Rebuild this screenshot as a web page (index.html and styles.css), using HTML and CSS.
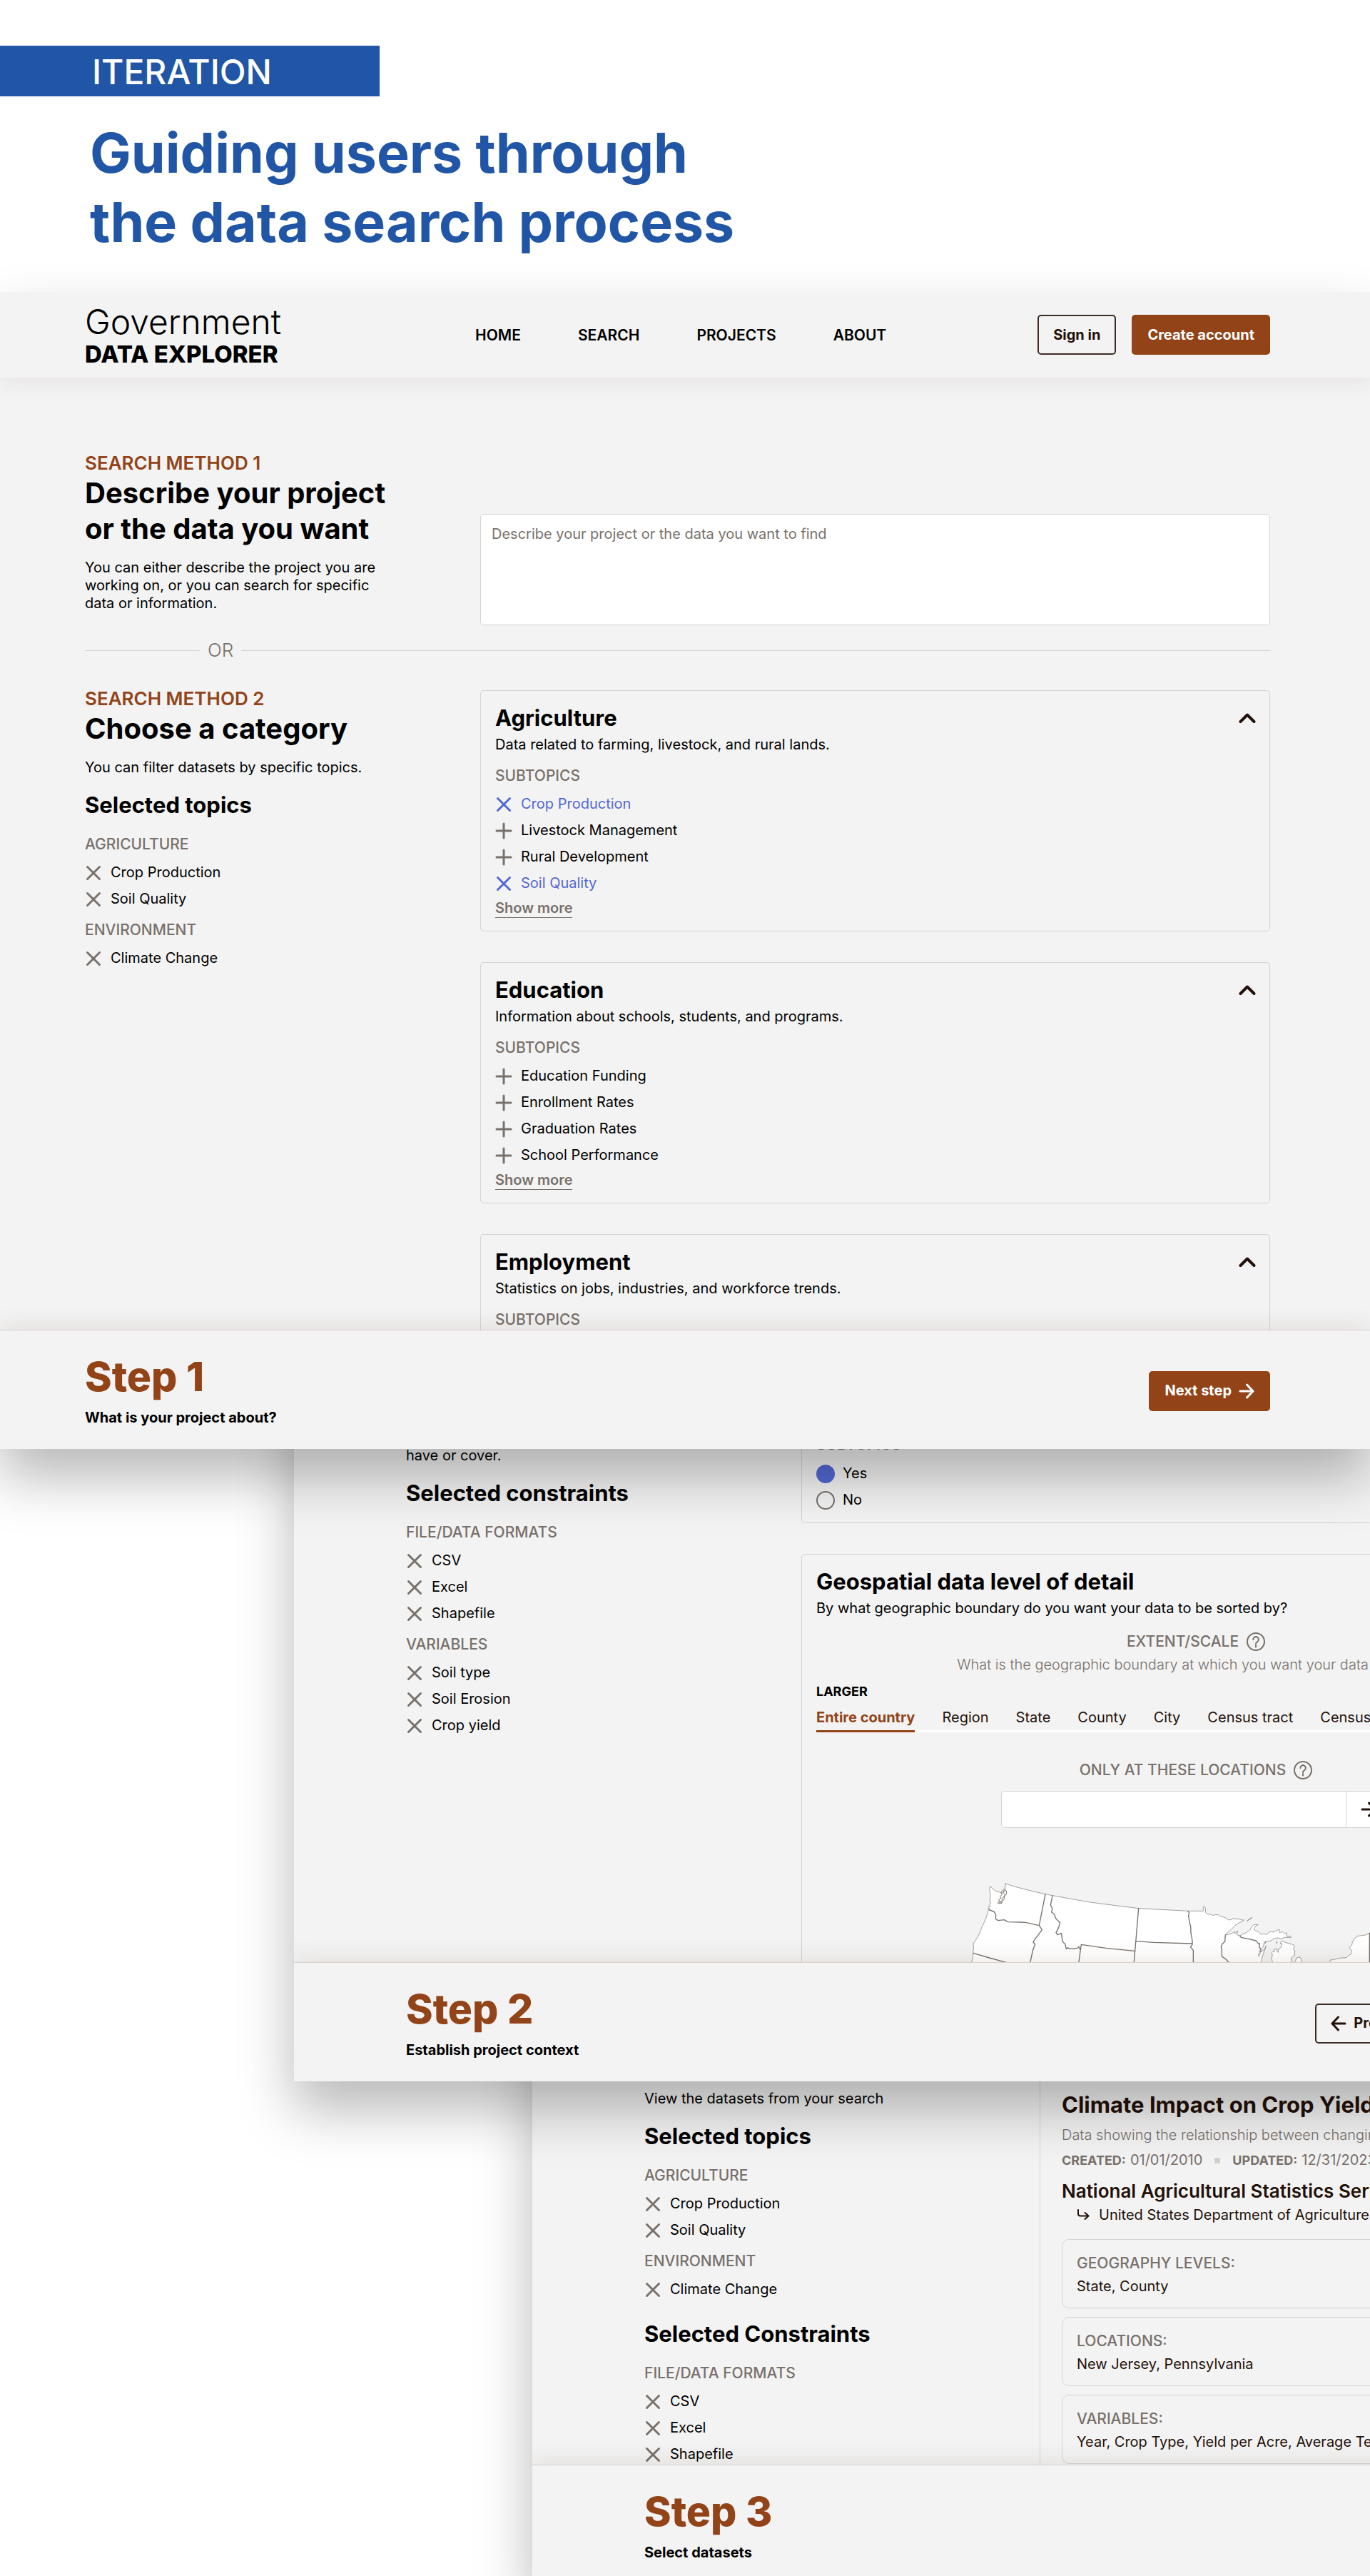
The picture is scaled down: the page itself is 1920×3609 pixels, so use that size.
FILE: index.html
```
<!DOCTYPE html>
<html lang="en">
<head>
  <meta charset="utf-8">
  <meta name="viewport" content="width=device-width, initial-scale=1">
  <title>Guiding users through the data search process</title>
  <link rel="stylesheet" href="styles.css">
</head>
<body>
  <svg class="sprite" aria-hidden="true">
    <symbol id="x" viewBox="0 0 24 24"><path d="M3.5 3.5l17 17M20.5 3.5l-17 17"/></symbol>
    <symbol id="plus" viewBox="0 0 24 24"><path d="M12 2v20M2 12h20"/></symbol>
    <symbol id="chevron" viewBox="0 0 24 24"><path d="M2.500 17L12 7.500l9.500 9.500"/></symbol>
    <symbol id="arrow-right" viewBox="0 0 22 22"><path d="M2 11h18M11.500 2l8.500 9-8.500 9"/></symbol>
    <symbol id="arrow-left" viewBox="0 0 22 22"><path d="M20 11H2M10.500 2L2 11l8.500 9"/></symbol>
    <symbol id="help" viewBox="0 0 28 28"><circle cx="14" cy="14" r="12"/><path d="M10.300 11a3.800 3.800 0 1 1 5.800 3.200c-1.400.9-2.100 1.500-2.100 3.100M14 19.300v2.200"/></symbol>
    <symbol id="turn" viewBox="0 0 20 20"><path d="M3 2v5.500a3 3 0 0 0 3 3h11M12.500 6l5 4.500-5 4.500"/></symbol>
  </svg>

  <main class="page">
    <header class="intro">
      <p class="intro__tag">ITERATION</p>
      <h1 class="intro__title">Guiding users through<br>the data search process</h1>
    </header>

    <section class="screen screen--one">
      <header class="topbar">
        <a class="logo" href="#"><span class="logo__light">Government</span><span class="logo__bold">DATA EXPLORER</span></a>
        <nav class="nav">
          <a href="#">HOME</a>
          <a href="#">SEARCH</a>
          <a href="#">PROJECTS</a>
          <a href="#">ABOUT</a>
        </nav>
        <div class="actions">
          <button class="btn btn--outline" type="button">Sign in</button>
          <button class="btn btn--solid" type="button">Create account</button>
        </div>
      </header>

      <div class="screen__body">
        <div class="split">
          <div>
            <p class="eyebrow">SEARCH METHOD 1</p>
            <h2 class="heading"><label for="describe">Describe your project<br>or the data you want</label></h2>
            <p class="text">You can either describe the project you are<br>working on, or you can search for specific<br>data or information.</p>
          </div>
          <textarea class="describe" id="describe" placeholder="Describe your project or the data you want to find"></textarea>
        </div>

        <div class="divider"><span>OR</span></div>

        <div class="split">
          <aside>
            <p class="eyebrow">SEARCH METHOD 2</p>
            <h2 class="heading">Choose a category</h2>
            <p class="text">You can filter datasets by specific topics.</p>
            <h3 class="title title--spaced">Selected topics</h3>
            <h4 class="label">AGRICULTURE</h4>
            <ul class="items">
              <li><button class="item" type="button"><svg class="icon"><use href="#x"/></svg>Crop Production</button></li>
              <li><button class="item" type="button"><svg class="icon"><use href="#x"/></svg>Soil Quality</button></li>
            </ul>
            <h4 class="label">ENVIRONMENT</h4>
            <ul class="items">
              <li><button class="item" type="button"><svg class="icon"><use href="#x"/></svg>Climate Change</button></li>
            </ul>
          </aside>

          <div class="cards cards--topics">
            <article class="card">
              <div class="card__head"><h3 class="title">Agriculture</h3><button class="toggle" type="button" aria-label="Collapse Agriculture"><svg class="icon"><use href="#chevron"/></svg></button></div>
              <p class="card__text">Data related to farming, livestock, and rural lands.</p>
              <h4 class="label">SUBTOPICS</h4>
              <ul class="items">
                <li><button class="item item--on" type="button"><svg class="icon"><use href="#x"/></svg>Crop Production</button></li>
                <li><button class="item" type="button"><svg class="icon"><use href="#plus"/></svg>Livestock Management</button></li>
                <li><button class="item" type="button"><svg class="icon"><use href="#plus"/></svg>Rural Development</button></li>
                <li><button class="item item--on" type="button"><svg class="icon"><use href="#x"/></svg>Soil Quality</button></li>
              </ul>
              <button class="more" type="button">Show more</button>
            </article>
            <article class="card">
              <div class="card__head"><h3 class="title">Education</h3><button class="toggle" type="button" aria-label="Collapse Education"><svg class="icon"><use href="#chevron"/></svg></button></div>
              <p class="card__text">Information about schools, students, and programs.</p>
              <h4 class="label">SUBTOPICS</h4>
              <ul class="items">
                <li><button class="item" type="button"><svg class="icon"><use href="#plus"/></svg>Education Funding</button></li>
                <li><button class="item" type="button"><svg class="icon"><use href="#plus"/></svg>Enrollment Rates</button></li>
                <li><button class="item" type="button"><svg class="icon"><use href="#plus"/></svg>Graduation Rates</button></li>
                <li><button class="item" type="button"><svg class="icon"><use href="#plus"/></svg>School Performance</button></li>
              </ul>
              <button class="more" type="button">Show more</button>
            </article>
            <article class="card card--tall">
              <div class="card__head"><h3 class="title">Employment</h3><button class="toggle" type="button" aria-label="Collapse Employment"><svg class="icon"><use href="#chevron"/></svg></button></div>
              <p class="card__text">Statistics on jobs, industries, and workforce trends.</p>
              <h4 class="label">SUBTOPICS</h4>
            </article>
          </div>
        </div>
      </div>

      <footer class="stepbar">
        <div>
          <h2 class="stepbar__title">Step 1</h2>
          <p class="stepbar__text">What is your project about?</p>
        </div>
        <div class="actions">
          <button class="btn btn--solid" type="button">Next step<svg class="arrow"><use href="#arrow-right"/></svg></button>
        </div>
      </footer>
    </section>

    <section class="screen screen--two">
      <div class="screen__body">
        <div class="split">
          <aside>
            <p class="text">have or cover.</p>
            <h3 class="title title--spaced">Selected constraints</h3>
            <h4 class="label">FILE/DATA FORMATS</h4>
            <ul class="items">
              <li><button class="item" type="button"><svg class="icon"><use href="#x"/></svg>CSV</button></li>
              <li><button class="item" type="button"><svg class="icon"><use href="#x"/></svg>Excel</button></li>
              <li><button class="item" type="button"><svg class="icon"><use href="#x"/></svg>Shapefile</button></li>
            </ul>
            <h4 class="label">VARIABLES</h4>
            <ul class="items">
              <li><button class="item" type="button"><svg class="icon"><use href="#x"/></svg>Soil type</button></li>
              <li><button class="item" type="button"><svg class="icon"><use href="#x"/></svg>Soil Erosion</button></li>
              <li><button class="item" type="button"><svg class="icon"><use href="#x"/></svg>Crop yield</button></li>
            </ul>
          </aside>

          <div class="cards">
            <fieldset class="card card--choices">
              <legend class="label">SUBTOPICS</legend>
              <label class="choice"><input type="radio" name="geo" checked>Yes</label>
              <label class="choice"><input type="radio" name="geo">No</label>
            </fieldset>
            <article class="card">
              <h3 class="title">Geospatial data level of detail</h3>
              <p class="card__text">By what geographic boundary do you want your data to be sorted by?</p>
              <h4 class="label label--center">EXTENT/SCALE<svg class="help"><use href="#help"/></svg></h4>
              <p class="hint">What is the geographic boundary at which you want your data grouped?</p>
              <p class="range">LARGER</p>
              <div class="tabs">
                <button class="tab tab--on" type="button">Entire country</button>
                <button class="tab" type="button">Region</button>
                <button class="tab" type="button">State</button>
                <button class="tab" type="button">County</button>
                <button class="tab" type="button">City</button>
                <button class="tab" type="button">Census tract</button>
                <button class="tab" type="button">Census block</button>
              </div>
              <label class="label label--center label--locations" for="place">ONLY AT THESE LOCATIONS<svg class="help"><use href="#help"/></svg></label>
              <div class="search">
                <input id="place" type="text">
                <button type="button" aria-label="Add location"><svg class="arrow"><use href="#arrow-right"/></svg></button>
              </div>
              <svg class="map" viewBox="15 -30 1932 360" role="img" aria-label="Map of the United States">
                <g class="map__land">
                  <path d="M30 335L34 318L39 306L40 292L42 280L41 270L44 262L42 240L50 228L62 211L70 192L76 176L86 155L92 140L98 126L104 103L108 98L104 92L110 94L107 85L115 82L109 76L117 68L111 64L113 50L114 38L112 20L110 6L113-2L120 6L128 13L138 20L150 23L163 28L172 22L169 10L178 14L174 2L180-2L176-13L215 0L280 17L345 32L375 38L420 46L480 57L540 67L640 80L737 92L870 99L945 103L1009 103L1009 86L1015 85L1018 92L1019 110L1024 115L1045 118L1050 123L1060 118L1073 119L1084 126L1100 130L1114 140L1125 140L1135 134L1148 137L1160 137L1172 141L1181 141L1172 148L1160 152L1142 164L1132 176L1118 188L1102 203L1116 202L1132 195L1142 190L1143 198L1154 186L1150 202L1162 208L1172 201L1190 194L1205 183L1212 170L1222 160L1240 160L1228 168L1222 180L1228 186L1240 188L1252 202L1264 198L1276 202L1284 192L1296 190L1304 192L1318 184L1328 181L1330 194L1342 190L1352 198L1358 194L1362 210L1370 210L1376 208L1378 214L1350 214L1338 220L1322 216L1304 220L1294 228L1286 230L1276 232L1268 240L1272 228L1264 238L1262 252L1254 260L1250 278L1242 294L1241 286L1250 262L1250 276L1268 264L1273 250L1262 282L1256 300L1252 335Z"/>
                  <path d="M1296 335L1300 318L1296 302L1300 288L1296 280L1302 272L1308 274L1306 264L1320 262L1318 272L1324 277L1326 262L1336 256L1340 240L1332 238L1340 228L1356 236L1374 240L1390 246L1392 256L1387 260L1394 270L1393 290L1382 298L1378 306L1380 316L1388 320L1396 314L1400 302L1408 297L1416 298L1422 308L1428 335Z"/>
                  <path d="M1548 335L1541 318L1543 309L1556 308L1580 301L1612 299L1618 292L1630 284L1633 272L1628 262L1622 256L1634 246L1636 232L1648 215L1660 208L1690 204L1708 196L1740 190L1800 200L1947 335Z"/>
                  <path d="M1317 232l3 3-3 4-2-4zM1192 146L1202 136L1214 130L1208 137L1198 142Z"/>
                </g>
                <path class="map__coast" d="M165 16l-6 10 4 8-9 8 6 6-12 8 6 6-10 6 8 4 2-10 8 2-6 6 4 2 6-12 8-10-2-8 8-8 2-14-8-4-6 10 8 8-8 12-6 12"/>
                <g class="map__border">
                  <path d="M345 32L319 164M108 98L128 105L137 118L136 136L146 143L172 140L188 149L240 150L262 151L319 164L331 182L312 208L299 224L294 235L302 242L292 270L279 330"/>
                  <path d="M375 38L367 78L374 92L371 108L382 116L390 136L407 152L401 172L390 194L396 203L412 197L418 232L428 242L433 262L440 257L446 262L480 259L486 253L492 266M484 330L496 244L600 259L721 271M737 92L717 330M726 230L800 235L962 240M42 280L110 300L220 330M178 320V330"/>
                  <path d="M945 103L950 112L947 122L951 150L956 168L957 196L963 228L963 244L955 254L967 268L967 330M1102 203L1100 232L1090 240L1084 252L1087 266L1087 294L1102 304L1116 318L1138 330M1163 207L1168 214L1198 220L1232 228L1240 240L1246 240L1244 256L1250 262"/>
                  <path d="M1708 196V330"/>
                </g>
              </svg>
            </article>
          </div>
        </div>
      </div>

      <footer class="stepbar">
        <div>
          <h2 class="stepbar__title">Step 2</h2>
          <p class="stepbar__text">Establish project context</p>
        </div>
        <div class="actions">
          <button class="btn btn--outline" type="button"><svg class="arrow"><use href="#arrow-left"/></svg>Previous step</button>
          <button class="btn btn--solid" type="button">Next step<svg class="arrow"><use href="#arrow-right"/></svg></button>
        </div>
      </footer>
    </section>

    <section class="screen screen--three">
      <div class="screen__body">
        <div class="split">
          <aside>
            <p class="text">View the datasets from your search</p>
            <h3 class="title title--spaced">Selected topics</h3>
            <h4 class="label">AGRICULTURE</h4>
            <ul class="items">
              <li><button class="item" type="button"><svg class="icon"><use href="#x"/></svg>Crop Production</button></li>
              <li><button class="item" type="button"><svg class="icon"><use href="#x"/></svg>Soil Quality</button></li>
            </ul>
            <h4 class="label">ENVIRONMENT</h4>
            <ul class="items">
              <li><button class="item" type="button"><svg class="icon"><use href="#x"/></svg>Climate Change</button></li>
            </ul>
            <h3 class="title title--spaced">Selected Constraints</h3>
            <h4 class="label">FILE/DATA FORMATS</h4>
            <ul class="items">
              <li><button class="item" type="button"><svg class="icon"><use href="#x"/></svg>CSV</button></li>
              <li><button class="item" type="button"><svg class="icon"><use href="#x"/></svg>Excel</button></li>
              <li><button class="item" type="button"><svg class="icon"><use href="#x"/></svg>Shapefile</button></li>
            </ul>
          </aside>

          <article class="dataset">
            <h3 class="title">Climate Impact on Crop Yields</h3>
            <p class="dataset__text">Data showing the relationship between changing climate and crop yields.</p>
            <p class="dataset__dates"><b>CREATED:</b> 01/01/2010<span class="dot"></span><b>UPDATED:</b> 12/31/2023</p>
            <h4 class="dataset__org">National Agricultural Statistics Service</h4>
            <p class="dataset__parent"><svg class="turn"><use href="#turn"/></svg>United States Department of Agriculture</p>
            <dl class="facts">
              <div><dt>GEOGRAPHY LEVELS:</dt><dd>State, County</dd></div>
              <div><dt>LOCATIONS:</dt><dd>New Jersey, Pennsylvania</dd></div>
              <div><dt>VARIABLES:</dt><dd>Year, Crop Type, Yield per Acre, Average Temperature</dd></div>
            </dl>
          </article>
        </div>
      </div>

      <footer class="stepbar">
        <div>
          <h2 class="stepbar__title">Step 3</h2>
          <p class="stepbar__text">Select datasets</p>
        </div>
      </footer>
    </section>
  </main>
</body>
</html>
```
FILE: styles.css
```
:root {
  --surface: #f3f3f3;
  --rust: #924318;
  --blue: #5468d4;
  --gray: #78716c;
  --ink: #231109;
  --line: #d8d2cf;
}

* { box-sizing: border-box; }

body {
  margin: 0;
  background: #fff;
  color: #000;
  font: 400 20px/25px Inter, "Liberation Sans", sans-serif;
}

h1, h2, h3, h4, p, ul, dl, dd, fieldset { margin: 0; padding: 0; }
ul { list-style: none; }
a { color: inherit; text-decoration: none; }
button, input, textarea { font: inherit; color: inherit; margin: 0; }
button { padding: 0; border: 0; background: none; cursor: pointer; }
svg { fill: none; stroke: currentColor; stroke-width: 2; stroke-linecap: round; stroke-linejoin: round; flex: none; }
.sprite { display: none; }

.page { overflow: hidden; }

/* Intro */
.intro { padding: 64px 0 49px; }
.intro__tag {
  width: 532px;
  padding: 2px 0 0 129px;
  background: #2155a6;
  color: #fff;
  font-size: 48px;
  font-weight: 500;
  line-height: 69px;
}
.intro__title {
  margin-top: 31px;
  padding-left: 126px;
  color: #2155a6;
  font-size: 77px;
  line-height: 97px;
}

/* Stacked screens */
.screen {
  position: relative;
  width: 100%;
  background: var(--surface);
  box-shadow: 0 40px 72px rgba(0, 0, 0, .28);
}
.screen__body { overflow: hidden; }
.screen--one { z-index: 3; }
.screen--two { z-index: 2; margin: -200px 0 0 412px; }
.screen--three { z-index: 1; margin: -200px 0 0 746px; }
.screen--one .screen__body { max-height: 1334px; padding: 103px 140px 0 119px; }
.screen--two .screen__body { max-height: 919px; padding: 0 102px 0 157px; }
.screen--three .screen__body { max-height: 737px; padding: 0 102px 0 157px; }
.screen--two aside { padding-top: 197px; }
.screen--three aside { padding-top: 212px; }

.split { display: grid; grid-template-columns: 554px minmax(0, 1fr); }

/* Top bar */
.topbar {
  position: relative;
  z-index: 1;
  display: grid;
  grid-template-columns: 547px 1fr auto;
  align-items: center;
  min-height: 120px;
  padding: 0 140px 0 119px;
  box-shadow: 0 4px 30px rgba(80, 40, 20, .08);
  clip-path: inset(0 0 -50px 0);
}
.logo { display: flex; flex-direction: column; }
.logo__light { font-size: 48px; font-weight: 300; line-height: 54px; }
.logo__bold { font-size: 33px; font-weight: 800; line-height: 36px; }
.nav { display: flex; gap: 80px; font-size: 21px; font-weight: 600; }
.actions { display: flex; gap: 22px; }

.btn {
  display: flex;
  align-items: center;
  gap: 10px;
  height: 56px;
  padding: 0 20px;
  border: 2px solid var(--rust);
  border-radius: 5px;
  font-weight: 700;
}
.btn--solid { background: var(--rust); color: #fff; }
.btn--outline { border-color: #3d2c25; color: var(--ink); }
.arrow { width: 22px; height: 22px; stroke-width: 3; }

/* Type */
.eyebrow { color: var(--rust); font-size: 26px; font-weight: 600; line-height: 34px; }
.heading { font-size: 40px; line-height: 50px; }
.heading + .text { margin-top: 17px; }
.title { font-size: 31px; line-height: 40px; }
.text + .title--spaced { margin-top: 20px; }
.items + .title--spaced { margin-top: 24px; }
.label { color: var(--gray); font-size: 21px; font-weight: 500; line-height: 30px; }
.title + .label { margin-top: 20px; }
.items + .label { margin-top: 10px; }

.items { margin-top: 6px; }
.item { display: flex; align-items: center; gap: 12px; line-height: 37px; }
.icon { width: 24px; height: 24px; }
.item .icon { color: var(--gray); stroke-width: 3; }
.item--on, .item--on .icon { color: var(--blue); }

/* Describe box */
.describe {
  display: block;
  width: 100%;
  height: 156px;
  margin-top: 88px;
  padding: 15px;
  border: 1px solid var(--line);
  border-radius: 5px;
  background: #fff;
  resize: none;
}
.describe::placeholder { color: var(--gray); opacity: 1; }

.divider {
  display: flex;
  align-items: center;
  gap: 11px;
  margin: 19px 0 35px;
  color: var(--gray);
  font-size: 26px;
  font-weight: 300;
  line-height: 32px;
}
.divider::before, .divider::after { content: ""; height: 1px; background: var(--line); }
.divider::before { width: 161px; }
.divider::after { flex: 1; }

/* Cards */
.cards { display: flex; flex-direction: column; gap: 43px; }
.cards--topics { margin-top: 5px; }
.card { padding: 18px 20px; border: 1px solid var(--line); border-radius: 5px; }
.card--tall { min-height: 338px; }
.card__head { display: flex; align-items: center; justify-content: space-between; }
.card__text { margin: 5px 0 16px; }
.toggle { display: flex; margin-right: -1px; color: var(--ink); }
.toggle .icon { stroke-width: 4; }
.more {
  display: block;
  margin-top: 4px;
  border-bottom: 1px solid var(--gray);
  color: var(--gray);
  font-weight: 600;
}

.card--choices { min-width: 0; margin-top: 160px; padding-bottom: 13px; }
.card--choices legend { float: left; width: 100%; margin-bottom: 7px; padding: 0; }
.choice { display: flex; clear: both; align-items: center; gap: 11px; line-height: 37px; }
.choice input {
  appearance: none;
  width: 26px;
  height: 26px;
  border: 2px solid var(--gray);
  border-radius: 50%;
}
.choice input:checked { border-color: var(--blue); background: var(--blue); }

.label--center { display: flex; align-items: center; justify-content: center; gap: 10px; margin-top: 19px; }
.label--locations { margin: 38px 0 14px; }
.help { width: 28px; height: 28px; }
.hint { margin: 5px 0 12px; color: var(--gray); font-weight: 300; text-align: center; }
.range { font-size: 18px; font-weight: 700; }
.tabs { display: flex; gap: 38px; margin-top: 12px; box-shadow: inset 0 -3px #fff; }
.tab { padding-bottom: 5px; border-bottom: 3px solid transparent; color: var(--ink); white-space: nowrap; }
.tab--on { border-color: var(--rust); color: var(--rust); font-weight: 700; }

.search {
  display: flex;
  width: 548px;
  height: 52px;
  margin: 0 auto;
  border: 1px solid var(--line);
  border-radius: 5px;
  background: #fff;
}
.search input { flex: 1; min-width: 0; padding: 0 15px; border: 0; background: none; }
.search button { display: grid; place-items: center; width: 64px; border-left: 1px solid var(--line); color: var(--ink); }

.map { display: block; width: 644px; height: 120px; margin: 72px auto 0; color: var(--gray); }
.map__land { fill: #fff; stroke-width: 2; }
.map__coast { stroke-width: 3; }
.map__border { stroke-width: 4; }

/* Dataset */
.dataset { padding: 213px 0 0 30px; border-left: 1px solid var(--line); color: var(--ink); white-space: nowrap; }
.dataset__text { margin: 10px 0; color: var(--gray); font-weight: 300; }
.dataset__dates { display: flex; align-items: center; gap: 6px; color: var(--gray); }
.dataset__dates b { font-size: 18px; }
.dot { width: 8px; height: 8px; margin: 0 11px; background: #d6d0cb; }
.dataset__org { margin: 15px 0 5px; font-size: 26px; font-weight: 600; line-height: 32px; }
.dataset__parent { display: flex; align-items: center; gap: 12px; padding-left: 20px; }
.turn { width: 20px; height: 20px; }
.facts { display: grid; gap: 12px; margin-top: 21px; }
.facts div { padding: 18px 20px 17px; border: 1px solid var(--line); border-radius: 10px; }
.facts dt { color: var(--gray); font-size: 21px; font-weight: 500; line-height: 30px; }
.facts dd { margin-top: 5px; }

/* Step bar */
.stepbar {
  position: relative;
  display: flex;
  align-items: center;
  justify-content: space-between;
  padding: 34px 140px 31px 119px;
  border-top: 1px solid var(--line);
  background: var(--surface);
  box-shadow: 0 -4px 30px rgba(80, 40, 20, .1);
  clip-path: inset(-50px 0 0 0);
}
.screen--two .stepbar { padding: 34px 88px 31px 157px; }
.screen--three .stepbar { padding: 34px 102px 20px 157px; }
.stepbar__title { color: var(--rust); font-size: 57px; font-weight: 800; line-height: 61px; }
.stepbar__text { margin-top: 15px; font-weight: 700; }
```
